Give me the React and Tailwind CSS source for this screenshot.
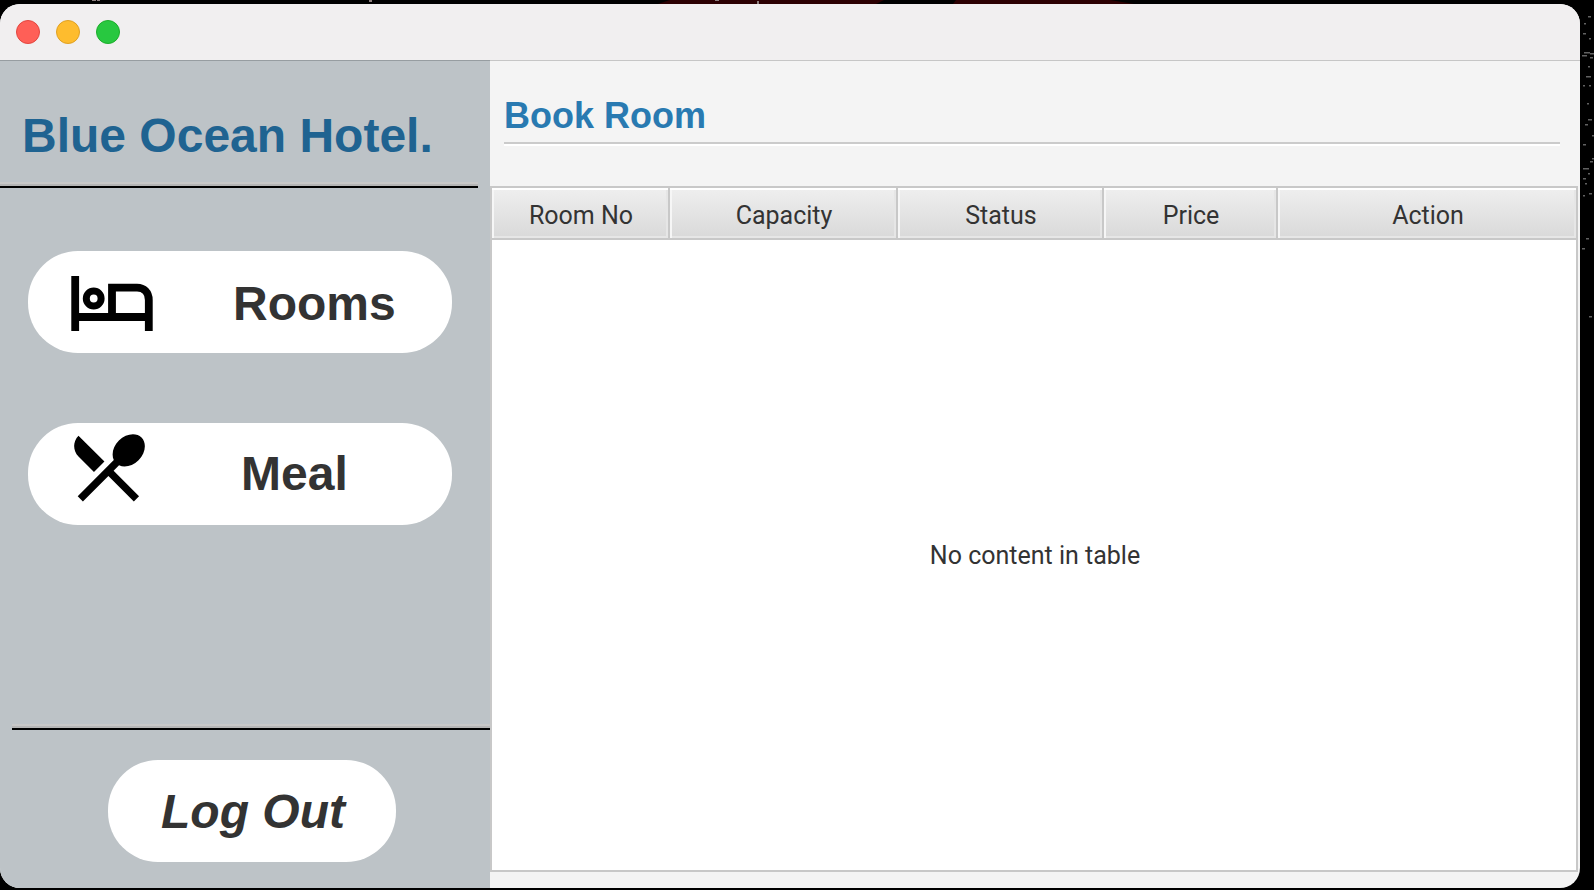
const COLUMNS = [
  { name: "Room No", width: "w-[178px]" },
  { name: "Capacity", width: "w-[228px]" },
  { name: "Status", width: "w-[206px]" },
  { name: "Price", width: "w-[174px]" },
  { name: "Action", width: "" },
];

const SPECKS = [
  [8, 16, 3], [4, 23, 2], [3, 33, 3], [9, 38, 2], [2, 55, 5], [4, 52, 6], [10, 53, 4], [10, 57, 3],
  [8, 66, 2], [6, 76, 5], [3, 85, 2], [9, 85, 2], [7, 103, 2], [8, 119, 4], [5, 124, 3], [12, 135, 2],
  [3, 144, 3], [12, 158, 2], [10, 161, 3], [3, 168, 6], [8, 173, 2], [3, 178, 3], [5, 183, 2], [9, 193, 3],
  [3, 195, 2], [6, 238, 3], [2, 248, 3], [9, 316, 3],
];

function NightBackdrop() {
  return (
    <>
      <svg className="absolute top-0 left-0 h-1 w-full" viewBox="0 0 1594 4" preserveAspectRatio="none" aria-hidden="true">
        <path d="M658 4L670 0H884L876 4zM953 4L956 0H1110L1134 4z" fill="#2c0002" />
        <path d="M92 0h4v1h-4zM97 0h3v1h-3zM369 0h3v2h-3zM715 0h4v1h-4zM757 1h2v3h-2z" fill="#8d7f7f" />
      </svg>
      <svg className="absolute top-0 right-0 h-[400px] w-[14px]" viewBox="0 0 14 400" aria-hidden="true">
        {SPECKS.map(([x, y, w]) => (
          <rect key={`${x}-${y}`} x={x} y={y} width={w} height="1.5" fill="#8a8a8a" opacity="0.7" />
        ))}
      </svg>
    </>
  );
}

function BedIcon() {
  return (
    <svg className="h-[55px] w-[82px]" viewBox="0 0 82 55" fill="none" stroke="#000" strokeWidth="7.8" aria-hidden="true">
      <path d="M4.2 0V55M77.8 55V24C77.8 16.5 73 11.6 66 11.6H41V41M4 41H77.8" />
      <circle cx="22.7" cy="22.5" r="7.4" strokeWidth="7" />
    </svg>
  );
}

function CutleryIcon() {
  return (
    <svg className="h-[68px] w-[71px]" viewBox="2.7 3.1 19.2 18.3" fill="#000" aria-hidden="true">
      <path d="M8.1 13.34l2.83-2.83L3.91 3.5c-1.56 1.56-1.56 4.09 0 5.66l4.19 4.18zm6.78-1.81c1.53.71 3.68.21 5.27-1.38 1.91-1.91 2.28-4.65.81-6.12-1.46-1.46-4.2-1.1-6.12.81-1.59 1.59-2.09 3.74-1.38 5.27L3.7 19.87l1.41 1.41L12 14.41l6.88 6.88 1.41-1.41L13.41 13l1.47-1.47z" />
    </svg>
  );
}

function Rule({ className }) {
  return <div className={`h-[6px] border-t-2 border-b-2 border-t-[#c8c8c8] border-b-black bg-[#b5b5b5] ${className}`} />;
}

function TitleBar() {
  return (
    <header className="flex h-14 shrink-0 items-center gap-4 bg-[#f1eff0] px-4">
      <button aria-label="Close" className="size-6 rounded-full border border-[#e2463f] bg-[#ff5f57]" />
      <button aria-label="Minimize" className="size-6 rounded-full border border-[#dfa023] bg-[#febc2e]" />
      <button aria-label="Zoom" className="size-6 rounded-full border border-[#1dad2b] bg-[#28c840]" />
    </header>
  );
}

function Sidebar() {
  return (
    <aside className="flex w-[490px] shrink-0 flex-col border-t border-[#979da1] bg-[#bdc3c7] font-bold text-[#333]">
      <h1 className="pt-[47px] pl-[22px] text-[48px] leading-[56px] text-[#1f6391]">Blue Ocean Hotel.</h1>
      <Rule className="mt-[18px] mr-3" />
      <nav className="mt-[63px] mr-[38px] ml-7 flex flex-col gap-[70px] text-[48px] leading-[56px]">
        <button className="flex h-[102px] items-center rounded-[50px] bg-white pt-[3px] pl-[43px]">
          <BedIcon />
          <span className="ml-20">Rooms</span>
        </button>
        <button className="flex h-[102px] items-center rounded-[50px] bg-white pl-[46px]">
          <span className="pb-3">
            <CutleryIcon />
          </span>
          <span className="ml-24">Meal</span>
        </button>
      </nav>
      <Rule className="mt-auto ml-3" />
      <button className="mt-[30px] mb-[26px] ml-[108px] h-[102px] w-[288px] rounded-[50px] bg-white pt-0.5 pl-[2px] text-[48px] leading-[56px] italic">
        Log Out
      </button>
    </aside>
  );
}

function RoomsTable() {
  return (
    <div className="mr-0.5 mb-4 min-h-0 flex-1 border-2 border-[#c8c8c8] bg-white">
      <table className="h-full w-full table-fixed border-separate border-spacing-0 font-['Roboto',sans-serif] text-[25px] text-[#333]">
        <thead>
          <tr>
            {COLUMNS.map((column) => (
              <th
                key={column.name}
                className={`h-[52px] border-r-2 border-b-2 border-[#c8c8c8] bg-linear-to-b from-[#efefef] to-[#d9d9d9] p-0 pt-1.5 pl-0.5 font-normal shadow-[inset_0_2px_0_#fff,inset_2px_0_0_#f6f6f6,inset_-2px_-2px_0_#e6e6e6] last:border-r-0 ${column.width}`}
              >
                {column.name}
              </th>
            ))}
          </tr>
        </thead>
        <tbody>
          <tr>
            <td colSpan={COLUMNS.length} className="h-full p-0 pt-0.5 pl-0.5 text-center">
              No content in table
            </td>
          </tr>
        </tbody>
      </table>
    </div>
  );
}

export default function App() {
  return (
    <div className="relative flex h-screen flex-col bg-black pt-1 pr-3.5 pb-0.5 font-['Liberation_Sans',Arial,sans-serif]">
      <NightBackdrop />
      <div className="flex min-h-0 flex-1 flex-col overflow-hidden rounded-[20px] bg-[#f4f4f4]">
        <TitleBar />
        <div className="flex min-h-0 flex-1">
          <Sidebar />
          <main className="flex min-w-0 flex-1 flex-col border-t border-[#c6c6c6]">
            <h2 className="pt-[34px] pl-[14px] text-[36px] leading-[42px] font-bold text-[#297ab1]">Book Room</h2>
            <div className="mt-[5px] mr-5 mb-10 ml-[14px] h-1 border-t-2 border-[#cbcbcb] bg-white" />
            <RoomsTable />
          </main>
        </div>
      </div>
    </div>
  );
}
